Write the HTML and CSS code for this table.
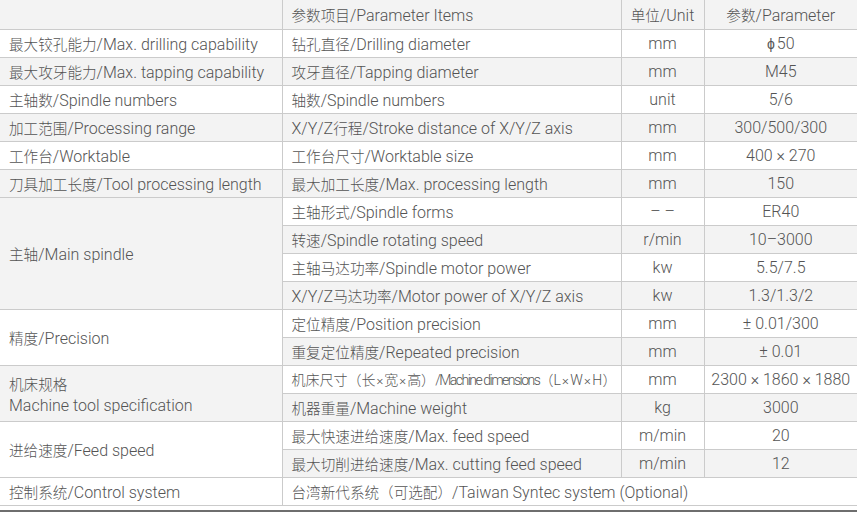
FILE: index.html
```html
<!DOCTYPE html>
<html lang="zh-CN">
<head>
<meta charset="utf-8">
<link rel="stylesheet" href="styles.css">
</head>
<body>
<table class="spec">
  <colgroup>
    <col class="c1"><col class="c2"><col class="c3"><col class="c4">
  </colgroup>
  <tr class="head g">
    <td></td>
    <td><span class="z">参数项目</span>/Parameter Items</td>
    <td class="ctr"><span class="z">单位</span>/Unit</td>
    <td class="ctr"><span class="z">参数</span>/Parameter</td>
  </tr>
  <tr>
    <td><span class="z">最大铰孔能力</span>/Max. drilling capability</td>
    <td><span class="z">钻孔直径</span>/Drilling diameter</td>
    <td class="ctr">mm</td>
    <td class="ctr"><span class="phi">ϕ</span>50</td>
  </tr>
  <tr class="g">
    <td><span class="z">最大攻牙能力</span>/Max. tapping capability</td>
    <td><span class="z">攻牙直径</span>/Tapping diameter</td>
    <td class="ctr">mm</td>
    <td class="ctr">M45</td>
  </tr>
  <tr>
    <td><span class="z">主轴数</span>/Spindle numbers</td>
    <td><span class="z">轴数</span>/Spindle numbers</td>
    <td class="ctr">unit</td>
    <td class="ctr">5/6</td>
  </tr>
  <tr class="g">
    <td><span class="z">加工范围</span>/Processing range</td>
    <td>X/Y/Z<span class="z">行程</span>/Stroke distance of X/Y/Z axis</td>
    <td class="ctr">mm</td>
    <td class="ctr">300/500/300</td>
  </tr>
  <tr>
    <td><span class="z">工作台</span>/Worktable</td>
    <td><span class="z">工作台尺寸</span>/Worktable size</td>
    <td class="ctr">mm</td>
    <td class="ctr">400 × 270</td>
  </tr>
  <tr class="g">
    <td><span class="z">刀具加工长度</span>/Tool processing length</td>
    <td><span class="z">最大加工长度</span>/Max. processing length</td>
    <td class="ctr">mm</td>
    <td class="ctr">150</td>
  </tr>
  <tr>
    <td rowspan="4" class="gcell"><span class="z">主轴</span>/Main spindle</td>
    <td><span class="z">主轴形式</span>/Spindle forms</td>
    <td class="ctr">– –</td>
    <td class="ctr">ER40</td>
  </tr>
  <tr class="g">
    <td><span class="z">转速</span>/Spindle rotating speed</td>
    <td class="ctr">r/min</td>
    <td class="ctr">10–3000</td>
  </tr>
  <tr>
    <td><span class="z">主轴马达功率</span>/Spindle motor power</td>
    <td class="ctr">kw</td>
    <td class="ctr">5.5/7.5</td>
  </tr>
  <tr class="g">
    <td>X/Y/Z<span class="z">马达功率</span>/Motor power of X/Y/Z axis</td>
    <td class="ctr">kw</td>
    <td class="ctr">1.3/1.3/2</td>
  </tr>
  <tr>
    <td rowspan="2" class="wcell"><span class="z">精度</span>/Precision</td>
    <td><span class="z">定位精度</span>/Position precision</td>
    <td class="ctr">mm</td>
    <td class="ctr">± 0.01/300</td>
  </tr>
  <tr class="g">
    <td><span class="z">重复定位精度</span>/Repeated precision</td>
    <td class="ctr">mm</td>
    <td class="ctr">± 0.01</td>
  </tr>
  <tr>
    <td rowspan="2" class="gcell two"><span class="z">机床规格</span><br>Machine tool specification</td>
    <td><span class="z dim">机床尺寸（长</span><span class="x">×</span><span class="z dim">宽</span><span class="x">×</span><span class="z dim">高）</span><span class="cond">/Machine dimensions</span><span class="z dim">（</span><span class="lwh">L<span class="x">×</span>W<span class="x">×</span>H</span><span class="z dim">）</span></td>
    <td class="ctr">mm</td>
    <td class="ctr">2300 × 1860 × 1880</td>
  </tr>
  <tr class="g">
    <td><span class="z">机器重量</span>/Machine weight</td>
    <td class="ctr">kg</td>
    <td class="ctr">3000</td>
  </tr>
  <tr>
    <td rowspan="2" class="wcell"><span class="z">进给速度</span>/Feed speed</td>
    <td><span class="z">最大快速进给速度</span>/Max. feed speed</td>
    <td class="ctr">m/min</td>
    <td class="ctr">20</td>
  </tr>
  <tr class="g">
    <td><span class="z">最大切削进给速度</span>/Max. cutting feed speed</td>
    <td class="ctr">m/min</td>
    <td class="ctr">12</td>
  </tr>
  <tr>
    <td><span class="z">控制系统</span>/Control system</td>
    <td colspan="3" class="last"><span class="z">台湾新代系统（可选配）</span>/Taiwan Syntec system (Optional)</td>
  </tr>
</table>
<div class="rule"></div>
</body>
</html>
```

FILE: styles.css
```css
html, body {
  margin: 0;
  padding: 0;
  background: #ffffff;
}

body {
  font-family: Roboto, "Noto Sans CJK SC", sans-serif;
  font-weight: 300;
  font-size: 16px;
  color: #545454;
}

.z {
  font-family: "Noto Sans CJK SC", sans-serif;
  font-weight: 300;
  font-size: 14.6px;
}

.spec {
  width: 857px;
  border-collapse: collapse;
  table-layout: fixed;
}

.c1 { width: 282px; }
.c2 { width: 339px; }
.c3 { width: 83px; }
.c4 { width: 153px; }

.spec td {
  height: 26px;
  padding: 1px 0 0 9px;
  border-bottom: 1px solid #cbcbcb;
  border-right: 1px solid #cbcbcb;
  white-space: nowrap;
  line-height: 20px;
  vertical-align: middle;
  background: #ffffff;
}

.spec td:last-child {
  border-right: none;
}

.spec tr.head td {
  height: 28px;
}

.spec tr.g td {
  background: #f3f3f3;
}

.spec td.gcell {
  background: #f3f3f3;
  border-right: 1px solid #cbcbcb;
}

.spec td.wcell {
  background: #ffffff;
  border-right: 1px solid #cbcbcb;
}

.spec td.ctr {
  text-align: center;
  padding: 1px 0 0 0;
}

.spec td.two {
  line-height: 21px;
}

.phi {
  font-size: 14px;
  margin-right: 2px;
}

.dim {
  font-size: 14px;
}

.x {
  font-size: 13px;
  margin: 0 1px;
}

.cond {
  letter-spacing: -1.5px;
  font-size: 14px;
}

.lwh {
  font-size: 14px;
  letter-spacing: 0.3px;
}

.rule {
  width: 857px;
  margin-top: 4px;
  border-top: 2px solid #6e6e6e;
}
```
